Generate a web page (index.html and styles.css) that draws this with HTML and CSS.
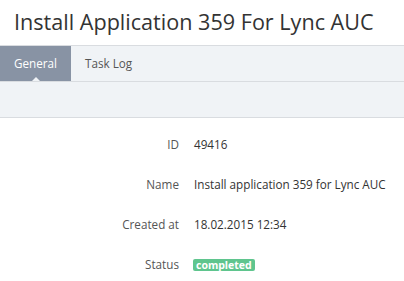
FILE: index.html
```html
<!DOCTYPE html>
<html lang="en">
<head>
    <meta charset="UTF-8">
    <title>Install Application 359 For Lync AUC</title>
    <link rel="stylesheet" href="styles.css">
</head>
<body>
    <h1 class="page-title">Install Application 359 For Lync AUC</h1>

    <div class="tabs">
        <div class="tab active">General</div>
        <div class="tab">Task Log</div>
    </div>
    <div class="toolbar"></div>

    <div class="details">
        <div class="row">
            <div class="label">ID</div>
            <div class="value">49416</div>
        </div>
        <div class="row">
            <div class="label">Name</div>
            <div class="value">Install application 359 for Lync AUC</div>
        </div>
        <div class="row">
            <div class="label">Created at</div>
            <div class="value">18.02.2015 12:34</div>
        </div>
        <div class="row">
            <div class="label">Status</div>
            <div class="value"><span class="badge">completed</span></div>
        </div>
    </div>
</body>
</html>
```

FILE: styles.css
```css
* {
    margin: 0;
    padding: 0;
    box-sizing: border-box;
}

body {
    font-family: 'Open Sans', sans-serif;
    font-size: 11.7px;
    color: #333;
    background-color: #fff;
}

.page-title {
    font-size: 21.6px;
    font-weight: normal;
    color: #333;
    height: 45px;
    padding: 7px 0 0 14px;
    line-height: 30px;
}

.tabs {
    display: flex;
    height: 37px;
    background-color: #f0f3f6;
    border-top: 1px solid #d9dce0;
    border-bottom: 1px solid #d9dce0;
}

.tab {
    position: relative;
    padding: 0 14px;
    line-height: 35px;
    color: #555;
}

.tab.active {
    background-color: #8893a4;
    color: #fff;
}

.tab.active::after {
    content: '';
    position: absolute;
    left: 50%;
    bottom: 0;
    margin-left: -4px;
    border: 4px solid transparent;
    border-bottom-color: #f0f3f6;
    border-top: 0;
}

.toolbar {
    height: 36px;
    background-color: #f0f3f6;
    border-bottom: 1px solid #d9dce0;
}

.details {
    padding-top: 6px;
}

.row {
    display: grid;
    grid-template-columns: 179px 1fr;
    column-gap: 15px;
    height: 40px;
    align-items: center;
}

.label {
    text-align: right;
    color: #555;
}

.value {
    color: #333;
}

.badge {
    display: inline-block;
    background-color: #5fc58e;
    color: #fff;
    font-weight: bold;
    font-size: 10.5px;
    line-height: 12px;
    padding: 0 3px;
    margin-left: -1px;
    border-radius: 2px;
}
```
